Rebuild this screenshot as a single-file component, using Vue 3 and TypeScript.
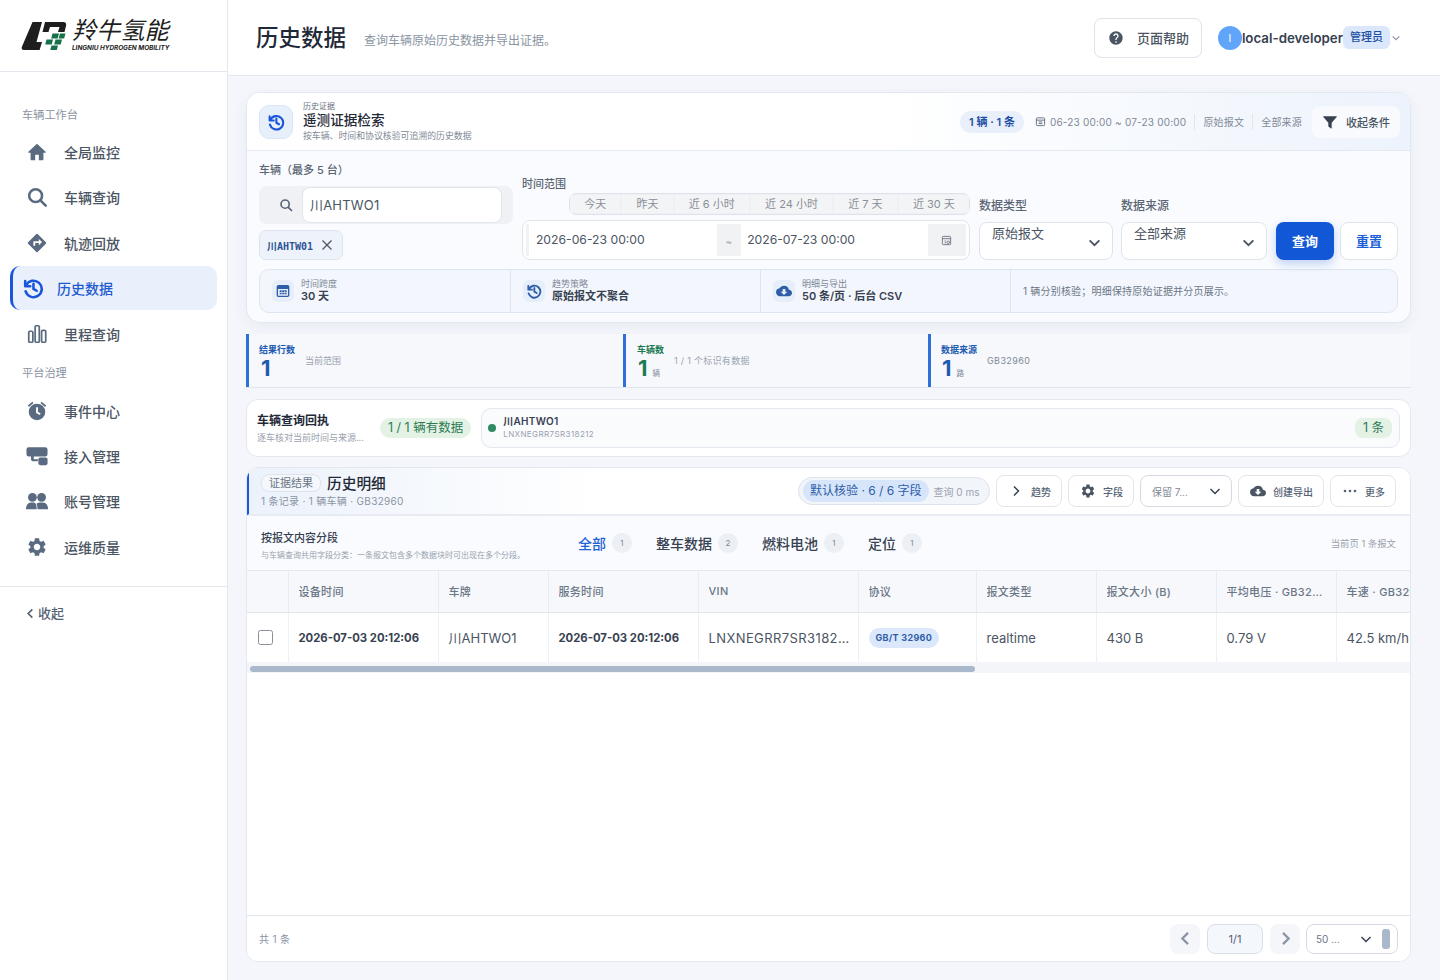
<script setup lang="ts">
const icons: Record<string, string> = {
  home: 'M12 3 2.600 11.600c-.5.5-.2 1.200.5 1.200H5v7c0 .7.5 1.200 1.200 1.200H10v-6h4v6h3.800c.7 0 1.200-.5 1.200-1.200v-7h1.900c.7 0 1-.7.5-1.200L12 3z',
  route:
    'M21.710 11.290l-9-9a.996.996 0 0 0-1.410 0l-9 9a.996.996 0 0 0 0 1.410l9 9c.39.39 1.020.39 1.410 0l9-9a.996.996 0 0 0 0-1.410zM14 14.500V12h-4v3H8v-4c0-.55.45-1 1-1h5V7.500l3.500 3.500-3.500 3.500z',
  gear: 'M19.140 12.940c.04-.3.06-.61.06-.94 0-.32-.02-.64-.07-.94l2.030-1.580a.49.49 0 0 0 .12-.61l-1.920-3.320a.488.488 0 0 0-.59-.22l-2.390.96c-.5-.38-1.030-.7-1.620-.94l-.36-2.540a.484.484 0 0 0-.48-.41h-3.840c-.24 0-.43.17-.47.41l-.36 2.540c-.59.24-1.130.57-1.620.94l-2.390-.96c-.22-.08-.47 0-.59.22L2.740 8.870c-.12.21-.08.47.12.61l2.030 1.580c-.05.3-.09.63-.09.94s.02.64.07.94l-2.030 1.580a.49.49 0 0 0-.12.61l1.920 3.320c.12.22.37.29.59.22l2.390-.96c.5.38 1.030.7 1.620.94l.36 2.540c.05.24.24.41.48.41h3.840c.24 0 .44-.17.47-.41l.36-2.540c.59-.24 1.130-.56 1.620-.94l2.390.96c.22.08.47 0 .59-.22l1.920-3.320c.12-.22.07-.47-.12-.61l-2.010-1.580zM12 15.600c-1.980 0-3.600-1.620-3.600-3.600s1.620-3.600 3.600-3.600 3.600 1.620 3.600 3.600-1.620 3.600-3.600 3.600z',
  help: 'M12 2C6.480 2 2 6.480 2 12s4.480 10 10 10 10-4.480 10-10S17.520 2 12 2zm1 17h-2v-2h2v2zm2.070-7.750l-.9.92C13.450 12.900 13 13.500 13 15h-2v-.5c0-1.100.45-2.100 1.170-2.830l1.240-1.260c.37-.36.59-.86.59-1.410 0-1.100-.9-2-2-2s-2 .9-2 2H8c0-2.210 1.790-4 4-4s4 1.790 4 4c0 .88-.36 1.680-.93 2.250z',
  cloud:
    'M19.350 10.040A7.490 7.490 0 0 0 12 4C9.110 4 6.600 5.640 5.350 8.040A5.994 5.994 0 0 0 0 14c0 3.310 2.690 6 6 6h13c2.760 0 5-2.240 5-5 0-2.640-2.050-4.780-4.650-4.960zM17 13l-5 5-5-5h3V9h4v4h3z',
  funnel: 'M2.500 3.500h19c.6 0 .9.7.5 1.100L14.500 13v8.200c0 .5-.5.8-.9.5l-3.600-2.400c-.3-.2-.5-.5-.5-.9V13L2 4.600c-.4-.4-.1-1.100.5-1.100z',
}

const primaryNav = [
  { label: '全局监控', icon: 'home' },
  { label: '车辆查询', icon: 'search' },
  { label: '轨迹回放', icon: 'route' },
  { label: '历史数据', icon: 'history', active: true },
  { label: '里程查询', icon: 'bars' },
]
const platformNav = [
  { label: '事件中心', icon: 'alarm' },
  { label: '接入管理', icon: 'link' },
  { label: '账号管理', icon: 'people' },
  { label: '运维质量', icon: 'gear' },
]
const quickRanges = ['今天', '昨天', '近 6 小时', '近 24 小时', '近 7 天', '近 30 天']
const segments = [
  { label: '全部', count: 1, active: true },
  { label: '整车数据', count: 2 },
  { label: '燃料电池', count: 1 },
  { label: '定位', count: 1 },
]
const columns = [
  { label: '设备时间', width: 150 },
  { label: '车牌', width: 110 },
  { label: '服务时间', width: 150 },
  { label: 'VIN', width: 160 },
  { label: '协议', width: 118 },
  { label: '报文类型', width: 120 },
  { label: '报文大小 (B)', width: 120 },
  { label: '平均电压 · GB32960', width: 120 },
  { label: '车速 · GB32960', width: 120 },
]
</script>

<template>
  <div class="shell">
    <aside class="sidebar">
      <div class="brand">
        <svg class="brand-mark" viewBox="0 0 46 30" aria-hidden="true">
          <path d="M11.500 1H21l-5.500 20H21l-2.400 8H3Q0 29 .8 26z" fill="#1e1e1e" />
          <path d="M24 1h18q4 0 3 4l-1.500 6H37l1.500-5H29l-1.500 5H21.500z" fill="#1e1e1e" />
          <path d="M31.500 12.500h6.500l-1.300 5h-6.500zM39 12.500h5.500l-1.400 5h-5.500zM25.500 18.500H32l-1.300 5h-6.500zM34.500 18.500h6.500l-1.300 5h-6.500zM30.500 24.500H37L35.800 29h-6.500z" fill="#17724a" />
        </svg>
        <div class="brand-text">
          <div class="brand-cn">羚牛氢能</div>
          <div class="brand-en">LINGNIU HYDROGEN MOBILITY</div>
        </div>
      </div>

      <nav class="nav">
        <div class="nav-title">车辆工作台</div>
        <a v-for="item in primaryNav" :key="item.label" class="nav-item" :class="{ active: item.active }">
          <span class="nav-icon">
            <svg v-if="item.icon === 'home' || item.icon === 'route'" viewBox="0 0 24 24"><path :d="icons[item.icon]" /></svg>
            <svg v-else-if="item.icon === 'search'" viewBox="0 0 24 24" class="line"><circle cx="10.500" cy="10.500" r="7" /><path d="m16 16 5.500 5.500" /></svg>
            <svg v-else-if="item.icon === 'history'" viewBox="0 0 24 24" class="line"><path d="M4.500 9a9 9 0 1 1-.6 6.500" /><path d="M3.500 4.500V10H9" /><path d="M12.500 7.500V13l3.500 2" /></svg>
            <svg v-else viewBox="0 0 24 24" class="line thin"><rect x="3" y="9" width="4.500" height="12" rx="1.200" /><rect x="10" y="3" width="4.500" height="18" rx="1.200" /><rect x="17" y="8" width="4.500" height="13" rx="1.200" /></svg>
          </span>
          <span>{{ item.label }}</span>
        </a>
        <div class="nav-title second">平台治理</div>
        <a v-for="item in platformNav" :key="item.label" class="nav-item">
          <span class="nav-icon">
            <svg v-if="item.icon === 'alarm'" viewBox="0 0 24 24">
              <circle cx="12" cy="13" r="9" />
              <path d="M2 6 7 1.800l1.200 1.500-5 4.200zM22 6 17 1.800l-1.200 1.500 5 4.200z" />
              <path d="M12 8v5.500l3.500 2" fill="none" stroke="#fff" stroke-width="2" />
            </svg>
            <svg v-else-if="item.icon === 'link'" viewBox="0 0 24 24">
              <path d="M3 2.500h18q2.500 0 2.500 2.500v5q0 2.500-2.500 2.500H8.500v3H13v2.200H7.500q-2 0-2-2v-3.200H3q-2.500 0-2.500-2.500V5Q.5 2.500 3 2.500z" />
              <rect x="13.500" y="13.500" width="10" height="8.500" rx="2" />
            </svg>
            <svg v-else-if="item.icon === 'people'" viewBox="0 0 24 24">
              <circle cx="7" cy="8" r="4.800" /><circle cx="17" cy="8" r="4.800" />
              <path d="M0 21q0-7 5.500-7.500h3Q12 14 11.500 21zM12.500 21q0-4.500-1-6 1.500-1.500 4-1.500h3Q24 14 24 21z" />
            </svg>
            <svg v-else viewBox="0 0 24 24"><path :d="icons.gear" /></svg>
          </span>
          <span>{{ item.label }}</span>
        </a>
      </nav>

      <div class="collapse">
        <svg viewBox="0 0 12 12" class="chev-left"><path d="M8 1.500 3.500 6 8 10.500" /></svg>
        <span>收起</span>
      </div>
    </aside>

    <main class="main">
      <header class="topbar">
        <h1>历史数据</h1>
        <p>查询车辆原始历史数据并导出证据。</p>
        <button class="help-btn">
          <svg viewBox="0 0 24 24"><path :d="icons.help" /></svg>
          <span>页面帮助</span>
        </button>
        <div class="user">
          <span class="avatar">l</span>
          <span class="user-name">local-developer</span>
          <span class="role">管理员</span>
          <svg viewBox="0 0 12 12" class="user-caret"><path d="m2 4 4 4 4-4" /></svg>
        </div>
      </header>

      <div class="content">
        <section class="search-card">
          <div class="search-head">
            <span class="head-icon">
              <svg viewBox="0 0 24 24" class="line"><path d="M4.500 9a9 9 0 1 1-.6 6.500" /><path d="M3.500 4.500V10H9" /><path d="M12.500 7.500V13l3.500 2" /></svg>
            </span>
            <div class="head-text">
              <div class="eyebrow">历史证据</div>
              <div class="head-title">遥测证据检索</div>
              <div class="head-sub">按车辆、时间和协议核验可追溯的历史数据</div>
            </div>
            <div class="head-meta">
              <span class="count-pill">1 辆 · 1 条</span>
              <svg viewBox="0 0 12 12" class="mini-cal"><rect x="1.500" y="2" width="9" height="8.500" rx="1" /><path d="M1.500 4.500h9M4 6.500h4M4 8.300h4" /></svg>
              <span class="meta-text first">06-23 00:00 ~ 07-23 00:00</span>
              <span class="meta-text">原始报文</span>
              <span class="meta-text">全部来源</span>
              <button class="fold-btn">
                <svg viewBox="0 0 24 24"><path :d="icons.funnel" /></svg>
                <span>收起条件</span>
              </button>
            </div>
          </div>

          <div class="search-body">
            <div class="filter-row">
              <div class="field vehicle">
                <label>车辆（最多 5 台）</label>
                <div class="vehicle-input">
                  <span class="addon">
                    <svg viewBox="0 0 24 24" class="line"><circle cx="10.500" cy="10.500" r="7" /><path d="m16 16 5.500 5.500" /></svg>
                  </span>
                  <div class="plain-input">川AHTWO1</div>
                </div>
                <div class="plate-tag">
                  <span>川AHTW01</span>
                  <svg viewBox="0 0 12 12"><path d="m1.500 1.500 9 9M10.500 1.500l-9 9" /></svg>
                </div>
              </div>

              <div class="field time">
                <label>时间范围</label>
                <div class="quick-group">
                  <span v-for="range in quickRanges" :key="range" class="quick">{{ range }}</span>
                </div>
                <div class="date-box">
                  <span class="date-edge"></span>
                  <span class="date-value">2026-06-23 00:00</span>
                  <span class="date-sep">~</span>
                  <span class="date-value end">2026-07-23 00:00</span>
                  <span class="date-icon">
                    <svg viewBox="0 0 12 12"><rect x="1.500" y="1.500" width="9" height="9" rx="1" /><path d="M1.500 4h9M4 6.500h1.500M4 8.500h1.500" /><circle cx="8" cy="8" r="1.400" /></svg>
                  </span>
                </div>
              </div>

              <div class="field type">
                <label>数据类型</label>
                <div class="select-box">
                  <span>原始报文</span>
                  <svg viewBox="0 0 12 12" class="caret"><path d="m1.500 4 4.500 4.500L10.500 4" /></svg>
                </div>
              </div>

              <div class="field source">
                <label>数据来源</label>
                <div class="select-box">
                  <span>全部来源</span>
                  <svg viewBox="0 0 12 12" class="caret"><path d="m1.500 4 4.500 4.500L10.500 4" /></svg>
                </div>
              </div>

              <button class="query-btn">查询</button>
              <button class="reset-btn">重置</button>
            </div>

            <div class="summary-strip">
              <div class="summary-cell">
                <span class="summary-icon">
                  <svg viewBox="0 0 24 24"><path d="M5 3h14q2.500 0 2.500 2.500v13q0 2.500-2.500 2.500H5q-2.500 0-2.500-2.500v-13Q2.500 3 5 3zm-.5 6v9.500q0 .5.5.5h14q.5 0 .5-.5V9z" fill-rule="evenodd" /><path d="M7 11h3v2.500H7zM10.800 11h3v2.500h-3zM14.500 11h3v2.500h-3zM7 14.500h3V17H7zM10.800 14.500h3V17h-3zM14.500 14.500h3V17h-3z" /></svg>
                </span>
                <div><div class="summary-label">时间跨度</div><div class="summary-value">30 天</div></div>
              </div>
              <div class="summary-cell">
                <span class="summary-icon">
                  <svg viewBox="0 0 24 24" class="line"><path d="M4.500 9a9 9 0 1 1-.6 6.500" /><path d="M3.500 4.500V10H9" /><path d="M12.500 7.500V13l3.500 2" /></svg>
                </span>
                <div><div class="summary-label">趋势策略</div><div class="summary-value">原始报文不聚合</div></div>
              </div>
              <div class="summary-cell">
                <span class="summary-icon">
                  <svg viewBox="0 0 24 24"><path :d="icons.cloud" /></svg>
                </span>
                <div><div class="summary-label">明细与导出</div><div class="summary-value">50 条/页 · 后台 CSV</div></div>
              </div>
              <div class="summary-note">1 辆分别核验；明细保持原始证据并分页展示。</div>
            </div>
          </div>
        </section>

        <section class="stats">
          <div class="stat s1">
            <div class="stat-main">
              <div class="stat-label blue">结果行数</div>
              <div class="stat-value blue">1</div>
            </div>
            <div class="stat-hint">当前范围</div>
          </div>
          <div class="stat s2">
            <div class="stat-main">
              <div class="stat-label green">车辆数</div>
              <div class="stat-value green">1<small>辆</small></div>
            </div>
            <div class="stat-hint">1 / 1 个标识有数据</div>
          </div>
          <div class="stat s3">
            <div class="stat-main">
              <div class="stat-label blue">数据来源</div>
              <div class="stat-value blue">1<small>路</small></div>
            </div>
            <div class="stat-hint">GB32960</div>
          </div>
        </section>

        <section class="receipt">
          <div class="receipt-text">
            <div class="receipt-title">车辆查询回执</div>
            <div class="receipt-sub">逐车核对当前时间与来源...</div>
          </div>
          <span class="receipt-pill">1 / 1 辆有数据</span>
          <div class="receipt-item">
            <span class="dot"></span>
            <div class="receipt-car">
              <div class="car-plate">川AHTWO1</div>
              <div class="car-vin">LNXNEGRR7SR318212</div>
            </div>
            <span class="receipt-count">1 条</span>
          </div>
        </section>

        <section class="result">
          <div class="result-head">
            <div class="result-title-wrap">
              <div class="result-title-row">
                <span class="evidence-tag">证据结果</span>
                <span class="result-title">历史明细</span>
              </div>
              <div class="result-sub">1 条记录 · 1 辆车辆 · GB32960</div>
            </div>
            <div class="result-tools">
              <div class="check-pill">
                <span class="check-inner">默认核验 · 6 / 6 字段</span>
                <span class="check-ms">查询 0 ms</span>
              </div>
              <button class="tool trend">
                <svg viewBox="0 0 12 12" class="tool-chev"><path d="m4 1.500 4.500 4.500L4 10.500" /></svg>
                <span>趋势</span>
              </button>
              <button class="tool fields">
                <svg viewBox="0 0 24 24" class="tool-icon"><path :d="icons.gear" /></svg>
                <span>字段</span>
              </button>
              <div class="tool tool-select">
                <span>保留 7...</span>
                <svg viewBox="0 0 12 12" class="tool-chev"><path d="m1.500 4 4.500 4.500L10.500 4" /></svg>
              </div>
              <button class="tool export">
                <svg viewBox="0 0 24 24" class="tool-icon"><path :d="icons.cloud" /></svg>
                <span>创建导出</span>
              </button>
              <button class="tool more">
                <svg viewBox="0 0 14 4" class="tool-dots"><circle cx="2" cy="2" r="1.300" /><circle cx="7" cy="2" r="1.300" /><circle cx="12" cy="2" r="1.300" /></svg>
                <span>更多</span>
              </button>
            </div>
          </div>

          <div class="segment-bar">
            <div class="segment-intro">
              <div class="segment-title">按报文内容分段</div>
              <div class="segment-sub">与车辆查询共用字段分类：一条报文包含多个数据块时可出现在多个分段。</div>
            </div>
            <div class="segment-tabs">
              <div v-for="seg in segments" :key="seg.label" class="segment" :class="{ active: seg.active }">
                <span>{{ seg.label }}</span>
                <em>{{ seg.count }}</em>
              </div>
            </div>
            <div class="segment-note">当前页 1 条报文</div>
          </div>

          <div class="table-wrap">
            <table>
              <colgroup>
                <col style="width: 41px" />
                <col v-for="col in columns" :key="col.label" :style="{ width: col.width + 'px' }" />
              </colgroup>
              <thead>
                <tr>
                  <th></th>
                  <th v-for="col in columns" :key="col.label"><div class="cell-text">{{ col.label }}</div></th>
                </tr>
              </thead>
              <tbody>
                <tr>
                  <td class="check-cell"><span class="checkbox"></span></td>
                  <td class="strong">2026-07-03 20:12:06</td>
                  <td>川AHTWO1</td>
                  <td class="strong">2026-07-03 20:12:06</td>
                  <td><div class="cell-text vin">LNXNEGRR7SR318212</div></td>
                  <td><span class="proto">GB/T 32960</span></td>
                  <td>realtime</td>
                  <td>430 B</td>
                  <td>0.79 V</td>
                  <td>42.5 km/h</td>
                </tr>
              </tbody>
            </table>
          </div>
          <div class="h-scroll"><span class="h-thumb"></span></div>

          <div class="table-empty"></div>

          <footer class="pager">
            <span class="total">共 1 条</span>
            <button class="page-arrow"><svg viewBox="0 0 12 12"><path d="M8 1.500 3.500 6 8 10.500" /></svg></button>
            <span class="page-now">1/1</span>
            <button class="page-arrow"><svg viewBox="0 0 12 12"><path d="m4 1.500 4.500 4.500L4 10.500" /></svg></button>
            <div class="page-size">
              <span>50 ...</span>
              <svg viewBox="0 0 12 12"><path d="m1.500 4 4.500 4.500L10.500 4" /></svg>
              <i></i>
            </div>
          </footer>
        </section>
      </div>
    </main>
  </div>
</template>

<style scoped>
.shell {
  display: flex;
  height: 980px;
  overflow: hidden;
  background: #f4f6fb;
  color: #1f2937;
  font-family: Inter, "Noto Sans CJK SC", sans-serif;
}

svg {
  display: block;
  fill: currentColor;
}

svg.line {
  fill: none;
  stroke: currentColor;
  stroke-width: 2.8;
  stroke-linecap: round;
  stroke-linejoin: round;
}

svg.line.thin {
  stroke-width: 1.9;
}

button {
  font-family: inherit;
  cursor: pointer;
}

/* 侧边栏 */
.sidebar {
  flex: 0 0 228px;
  box-sizing: border-box;
  display: flex;
  flex-direction: column;
  background: #fff;
  border-right: 1px solid #e3e7ee;
}

.brand {
  height: 72px;
  box-sizing: border-box;
  display: flex;
  gap: 5px;
  padding: 19px 0 0 21px;
  border-bottom: 1px solid #e3e7ee;
}

.brand-mark {
  width: 46px;
  height: 30px;
  margin-top: 2px;
}

.brand-text {
  color: #1e1e1e;
}

.brand-cn {
  font-size: 24px;
  line-height: 24px;
  font-weight: 400;
  font-style: italic;
  letter-spacing: 0.2px;
}

.brand-en {
  margin-top: 1px;
  font-size: 6.4px;
  line-height: 8px;
  font-weight: 700;
  font-style: italic;
  white-space: nowrap;
}

.nav {
  padding: 34px 10px 0;
  height: 515px;
  box-sizing: border-box;
  border-bottom: 1px solid #e3e7ee;
}

.nav-title {
  padding-left: 12px;
  height: 18px;
  margin-bottom: 6px;
  font-size: 11.2px;
  line-height: 18px;
  color: #8b93a1;
}

.nav-title.second {
  margin: 8px 0 7px;
}

.nav-item {
  display: flex;
  align-items: center;
  gap: 16px;
  height: 44px;
  margin-bottom: 1.400px;
  padding-left: 16px;
  width: 207px;
  box-sizing: border-box;
  font-size: 14px;
  font-weight: 500;
  color: #4b5563;
  border-radius: 10px;
}

.nav-icon {
  width: 22px;
  height: 22px;
  color: #5a6a80;
}

.nav-item.active {
  gap: 13px;
  padding-left: 9px;
  color: #1f5bd0;
  background: #e9f0fc;
  border-left: 3px solid #1a56db;
}

.nav-item.active .nav-icon {
  color: #1a56db;
}

.collapse {
  display: flex;
  align-items: center;
  gap: 2px;
  padding: 16px 0 0 25px;
  font-size: 13px;
  font-weight: 500;
  line-height: 20px;
  color: #566375;
}

.chev-left {
  width: 11px;
  height: 11px;
  fill: none;
  stroke: currentColor;
  stroke-width: 1.800;
}

/* 顶栏 */
.main {
  flex: 1;
  min-width: 0;
  display: flex;
  flex-direction: column;
}

.topbar {
  height: 76px;
  flex: none;
  box-sizing: border-box;
  display: flex;
  align-items: center;
  padding: 0 39px 0 28px;
  background: #fff;
  border-bottom: 1px solid #e3e7ee;
}

.topbar h1 {
  margin: 0;
  font-size: 22.500px;
  line-height: 32px;
  font-weight: 500;
  color: #1f2937;
}

.topbar p {
  margin: 3px 0 0 18px;
  font-size: 12px;
  color: #8a94a3;
}

.help-btn {
  margin-left: auto;
  display: flex;
  align-items: center;
  gap: 13px;
  width: 108px;
  height: 40px;
  padding: 0 0 0 13px;
  font-size: 13px;
  font-weight: 500;
  color: #4b5563;
  background: #fff;
  border: 1px solid #dfe3ea;
  border-radius: 8px;
}

.help-btn svg {
  width: 16px;
  height: 16px;
  color: #4b5563;
}

.user {
  display: flex;
  align-items: center;
  margin-left: 16px;
}

.avatar {
  width: 24px;
  height: 24px;
  border-radius: 50%;
  background: #60a5fa;
  color: #fff;
  font-size: 11px;
  line-height: 24px;
  text-align: center;
}

.user-name {
  font-size: 13.300px;
  font-weight: 600;
  color: #374151;
}

.role {
  margin-right: 1px;
  padding: 0 7px;
  height: 23px;
  font-size: 11px;
  font-weight: 500;
  line-height: 23px;
  color: #1e4fa3;
  background: #dbe8fc;
  border-radius: 6px;
}

.user-caret {
  width: 10px;
  height: 10px;
  fill: none;
  stroke: #8b93a1;
  stroke-width: 1.300;
}

/* 内容区 */
.content {
  flex: 1;
  min-height: 0;
  display: flex;
  flex-direction: column;
  padding: 16px 29px 18px 18px;
}

.search-card {
  flex: none;
  height: 231px;
  box-sizing: border-box;
  background: #f9fbfe;
  border: 1px solid #e3e8f0;
  border-radius: 14px;
  box-shadow: 0 4px 14px rgba(40, 70, 120, 0.06);
  overflow: hidden;
}

.search-head {
  height: 58px;
  box-sizing: border-box;
  display: flex;
  align-items: center;
  padding: 0 10px 0 12px;
  background: linear-gradient(90deg, #fff 0%, #fff 55%, #edf3fc 100%);
  border-bottom: 1px solid #e4e9f1;
}

.head-icon {
  width: 34px;
  height: 34px;
  flex: none;
  display: grid;
  place-items: center;
  color: #1a56db;
  background: #e7effb;
  border: 1px solid #dae5f6;
  border-radius: 10px;
  box-sizing: border-box;
}

.head-icon svg {
  width: 18px;
  height: 18px;
}

.head-text {
  margin: -2px 0 0 10px;
}

.eyebrow {
  font-size: 8px;
  line-height: 10px;
  color: #6b7280;
}

.head-title {
  font-size: 13.600px;
  line-height: 19px;
  font-weight: 500;
  color: #1f2937;
}

.head-sub {
  font-size: 8.900px;
  line-height: 11px;
  color: #7f8896;
}

.head-meta {
  margin-left: auto;
  display: flex;
  align-items: center;
}

.count-pill {
  height: 22px;
  padding: 0 9px;
  margin-right: 11px;
  font-size: 11px;
  font-weight: 600;
  line-height: 22px;
  color: #1e4fa3;
  background: #e9f0fb;
  border-radius: 11px;
}

.mini-cal {
  width: 11px;
  height: 11px;
  margin-right: 4px;
  fill: none;
  stroke: #5f6b7c;
  stroke-width: 1;
}

.meta-text {
  padding: 0 8px;
  font-size: 10px;
  letter-spacing: 0.2px;
  color: #7f8896;
  border-left: 1px solid #e1e6ee;
  line-height: 16px;
}

.meta-text.first {
  padding-left: 0;
  border-left: 0;
}

.fold-btn {
  display: flex;
  align-items: center;
  gap: 8px;
  width: 88px;
  height: 32px;
  margin-left: 2px;
  padding: 0 0 0 10px;
  font-size: 11px;
  font-weight: 500;
  color: #4b5563;
  background: #f8fafd;
  border: 0;
  border-radius: 8px;
}

.fold-btn svg {
  width: 16px;
  height: 16px;
  color: #374151;
}

.search-body {
  padding: 11px 12px 0;
}

.filter-row {
  display: flex;
  align-items: flex-end;
  height: 98px;
}

.field label {
  display: block;
  font-size: 11px;
  line-height: 16px;
  font-weight: 500;
  color: #5b6675;
}

.vehicle {
  width: 254px;
  margin-right: 9px;
}

.vehicle-input {
  display: flex;
  align-items: center;
  height: 38px;
  margin-top: 8px;
  background: #eff1f5;
  border-radius: 8px;
}

.addon {
  width: 43px;
  padding-left: 20px;
  box-sizing: border-box;
  color: #566375;
}

.addon svg {
  width: 14px;
  height: 14px;
}

.plain-input {
  width: 200px;
  height: 36px;
  box-sizing: border-box;
  padding-left: 7px;
  font-size: 13px;
  letter-spacing: 0.2px;
  line-height: 35px;
  color: #4b5563;
  background: #fff;
  border: 1px solid #e1e5ec;
  border-radius: 8px;
}

.plate-tag {
  display: flex;
  align-items: center;
  gap: 8px;
  width: 84px;
  height: 30px;
  box-sizing: border-box;
  margin-top: 6px;
  padding-left: 7px;
  font-size: 10px;
  font-weight: 700;
  font-family: "DejaVu Sans Mono", "Noto Sans CJK SC", monospace;
  color: #2e5596;
  background: #eef3fb;
  border: 1px solid #dde3ed;
  border-radius: 7px;
}

.plate-tag svg {
  width: 12px;
  height: 12px;
  fill: none;
  stroke: #4b5563;
  stroke-width: 1.300;
}

.time {
  width: 448px;
  margin-right: 9px;
}

.quick-group {
  display: flex;
  gap: 2px;
  width: 401px;
  height: 22px;
  margin: 1px 0 5px auto;
  padding: 1px 0;
  box-sizing: border-box;
  background: #eef0f3;
  border: 1px solid #dfe3e9;
  border-radius: 7px;
}

.quick {
  flex: 1 1 auto;
  text-align: center;
  padding: 0 6px;
  font-size: 11px;
  line-height: 18px;
  color: #8a8f98;
  background: #f3f4f6;
  white-space: nowrap;
}

.date-box {
  display: flex;
  align-items: center;
  height: 40px;
  padding: 3px;
  box-sizing: border-box;
  background: #fff;
  border: 1px solid #e0e4ea;
  border-radius: 8px;
}

.date-edge {
  width: 3px;
  height: 32px;
  background: #f1f2f4;
}

.date-value {
  padding: 0 0 2px 7px;
  width: 185px;
  font-size: 12.200px;
  color: #4b5563;
}

.date-value.end {
  padding-left: 17px;
}

.date-sep {
  width: 25px;
  height: 32px;
  font-size: 10px;
  line-height: 34px;
  text-align: center;
  color: #9aa2ae;
  background: #f1f2f4;
  margin-right: -11px;
  position: relative;
}

.date-icon {
  margin-left: auto;
  width: 39px;
  height: 32px;
  display: grid;
  place-items: center;
  background: #f1f2f4;
}

.date-icon svg {
  width: 11px;
  height: 11px;
  fill: none;
  stroke: #6b7280;
  stroke-width: 1;
}

.type {
  width: 134px;
  margin-right: 8px;
}

.source {
  width: 146px;
  margin-right: 9px;
}

.type label,
.source label {
  font-size: 12px;
  line-height: 18px;
  margin-bottom: 7px;
}

.select-box {
  position: relative;
  height: 38px;
  box-sizing: border-box;
  padding: 0 0 0 12px;
  font-size: 13px;
  line-height: 20px;
  color: #4b5563;
  background: #fff;
  border: 1px solid #dfe3ea;
  border-radius: 8px;
}

.caret {
  position: absolute;
  right: 11px;
  top: 13px;
  width: 13px;
  height: 13px;
  fill: none;
  stroke: #4b5563;
  stroke-width: 1.700;
}

.query-btn,
.reset-btn {
  flex: none;
  height: 38px;
  padding: 0 0 2px;
  font-size: 13px;
  font-weight: 600;
  border-radius: 8px;
}

.query-btn {
  width: 58px;
  color: #fff;
  background: #1257d6;
  border: 0;
  box-shadow: 0 4px 10px rgba(18, 87, 214, 0.25);
}

.reset-btn {
  width: 58px;
  margin-left: 6px;
  color: #1a5fd8;
  background: #fff;
  border: 1px solid #dfe3ea;
}

.summary-strip {
  display: grid;
  grid-template-columns: 251px 250px 250px 1fr;
  height: 44px;
  margin-top: 9px;
  box-sizing: border-box;
  background: #f3f7fd;
  border: 1px solid #dde5f0;
  border-radius: 10px;
}

.summary-cell {
  display: flex;
  align-items: center;
  gap: 7px;
  padding-left: 12px;
  border-right: 1px solid #dde5f0;
}

.summary-icon {
  width: 22px;
  height: 22px;
  display: grid;
  place-items: center;
  color: #2e5ea8;
  background: #e6eefa;
  border-radius: 6px;
}

.summary-icon svg {
  width: 16px;
  height: 16px;
}

.summary-label {
  margin-top: -2px;
  font-size: 9px;
  line-height: 11px;
  color: #7f8896;
}

.summary-value {
  font-size: 11px;
  line-height: 14px;
  font-weight: 600;
  color: #374151;
}

.summary-note {
  padding-left: 12px;
  font-size: 10px;
  letter-spacing: 0.2px;
  line-height: 42px;
  color: #6b7686;
}

/* 指标条 */
.stats {
  display: grid;
  grid-template-columns: 377px 305px 1fr;
  flex: none;
  height: 54px;
  margin-top: 11px;
  background: #f6f8fc;
  border-bottom: 1px solid #e1e6ee;
  box-sizing: border-box;
}

.stat {
  display: flex;
  padding: 10px 0 0 10px;
  border-left: 3px solid #2f6fd8;
}

.stat.s2 {
  padding-left: 11px;
}

.stat-main {
  width: 46px;
}

.s2 .stat-main {
  width: 37px;
}

.stat-label {
  font-size: 9px;
  line-height: 11px;
  font-weight: 600;
  white-space: nowrap;
}

.stat-value {
  margin-left: 1px;
  font-size: 22px;
  line-height: 26px;
  font-weight: 700;
  white-space: nowrap;
}

.s1 .stat-value {
  margin-left: 2px;
}

.stat-value small {
  margin-left: 5px;
  font-size: 7.500px;
  font-weight: 400;
  color: #7f8896;
}

.blue {
  color: #1d5bb0;
}

.green {
  color: #1e7a52;
}

.stat-hint {
  margin-top: 11px;
  font-size: 9px;
  line-height: 12px;
  color: #9aa2ae;
}

.s2 .stat-hint {
  white-space: nowrap;
  letter-spacing: 0.3px;
}

.s3 .stat-hint {
  white-space: nowrap;
  color: #7f8896;
  letter-spacing: 0.4px;
}

/* 回执 */
.receipt {
  flex: none;
  display: flex;
  align-items: center;
  height: 58px;
  margin-top: 11px;
  padding: 0 10px;
  box-sizing: border-box;
  background: #fff;
  border: 1px solid #e3e8f0;
  border-radius: 12px;
}

.receipt-text {
  width: 123px;
}

.receipt-title {
  font-size: 12px;
  line-height: 18px;
  font-weight: 600;
  color: #1f2937;
}

.receipt-sub {
  margin-top: 1px;
  font-size: 9px;
  line-height: 13px;
  color: #9aa2ae;
  white-space: nowrap;
}

.receipt-pill {
  height: 20px;
  padding: 0 8px;
  font-size: 12.500px;
  line-height: 20px;
  color: #2e7a52;
  background: #e4f2e6;
  border-radius: 10px;
  white-space: nowrap;
}

.receipt-item {
  flex: 1;
  display: flex;
  align-items: center;
  height: 40px;
  margin-left: 10px;
  padding: 0 7px 0 6px;
  box-sizing: border-box;
  background: #f9fbfd;
  border: 1px solid #e3e8f0;
  border-radius: 10px;
}

.dot {
  width: 8px;
  height: 8px;
  border-radius: 50%;
  background: #2e8b63;
  margin-right: 7px;
}

.receipt-car {
  margin-top: -2px;
}

.car-plate {
  font-size: 10px;
  line-height: 14px;
  font-weight: 600;
  letter-spacing: 0.3px;
  color: #374151;
}

.car-vin {
  margin-top: 1px;
  font-size: 8px;
  line-height: 11px;
  letter-spacing: 0.4px;
  color: #9aa2ae;
}

.receipt-count {
  margin-left: auto;
  height: 20px;
  padding: 0 8px;
  font-size: 12.500px;
  line-height: 20px;
  color: #2e7a52;
  background: #e4f2e6;
  border-radius: 8px;
}

/* 明细 */
.result {
  flex: 1;
  min-height: 0;
  margin-top: 10px;
  display: flex;
  flex-direction: column;
  background: #fff;
  border: 1px solid #e3e8f0;
  border-radius: 12px;
  overflow: hidden;
}

.result-head {
  flex: none;
  display: flex;
  align-items: center;
  justify-content: space-between;
  height: 48px;
  box-sizing: border-box;
  padding: 0 14px 2px 12px;
  background: linear-gradient(90deg, #ecf2fb 0%, #fff 30%);
  border-left: 3px solid #1a56db;
  border-bottom: 2px solid #e8ecf2;
  margin-left: -1px;
}

.result-title-row {
  display: flex;
  align-items: center;
  gap: 6px;
  height: 20px;
}

.evidence-tag {
  height: 16px;
  padding: 0 7px;
  font-size: 11px;
  line-height: 16px;
  color: #6b7686;
  background: #f4f7fb;
  border: 1px solid #dde3ed;
  border-radius: 8px;
}

.result-title {
  font-size: 14.700px;
  font-weight: 500;
  color: #1f2937;
}

.result-sub {
  margin-top: 1px;
  font-size: 10px;
  line-height: 14px;
  letter-spacing: 0.3px;
  color: #8a94a3;
}

.result-tools {
  display: flex;
  align-items: center;
  gap: 6px;
  margin-top: 2px;
}

.check-pill {
  display: flex;
  align-items: center;
  width: 192px;
  height: 28px;
  padding: 0 0 0 4px;
  box-sizing: border-box;
  background: #f2f5fa;
  border: 1px solid #dde3ed;
  border-radius: 14px;
}

.check-inner {
  height: 22px;
  padding: 0 7px;
  font-size: 12px;
  line-height: 22px;
  color: #2e5ea8;
  background: #d7e5fa;
  border-radius: 11px;
  white-space: nowrap;
}

.check-ms {
  margin-left: 5px;
  font-size: 10px;
  color: #9aa2ae;
  white-space: nowrap;
}

.tool {
  display: flex;
  align-items: center;
  justify-content: space-between;
  width: 66px;
  height: 32px;
  padding: 0 10px 0 11px;
  box-sizing: border-box;
  font-size: 10px;
  font-weight: 500;
  color: #566375;
  background: #fff;
  border: 1px solid #e1e5ec;
  border-radius: 8px;
  white-space: nowrap;
}

.tool.trend {
  padding-left: 13px;
}

.tool.export {
  width: 86px;
}

.tool.more {
  padding-left: 12px;
}

.tool-icon {
  width: 16px;
  height: 16px;
  color: #4b5563;
}

.tool-chev {
  width: 12px;
  height: 12px;
  fill: none;
  stroke: #374151;
  stroke-width: 1.500;
}

.tool-dots {
  width: 14px;
  height: 4px;
  color: #566375;
}

.tool.tool-select {
  width: 92px;
  font-weight: 400;
  color: #7f8896;
  border-color: #d6dbe3;
}

.segment-bar {
  flex: none;
  display: flex;
  align-items: center;
  height: 55px;
  box-sizing: border-box;
  padding: 0 14px;
  background: #f9fbfe;
  border-bottom: 1px solid #e4e8ef;
}

.segment-intro {
  width: 317px;
  padding-top: 4px;
}

.segment-title {
  font-size: 11px;
  line-height: 16px;
  font-weight: 500;
  color: #374151;
}

.segment-sub {
  margin-top: 3px;
  font-size: 8px;
  line-height: 12px;
  color: #9aa2ae;
  white-space: nowrap;
}

.segment-tabs {
  display: flex;
  gap: 24px;
  margin-top: -1px;
}

.segment {
  display: flex;
  align-items: center;
  gap: 6px;
  font-size: 14px;
  font-weight: 500;
  color: #374151;
}

.segment.active {
  color: #1f62d6;
}

.segment em {
  width: 20px;
  height: 20px;
  font-size: 8px;
  font-style: normal;
  font-weight: 400;
  line-height: 20px;
  text-align: center;
  color: #7f8896;
  background: #eceff4;
  border-radius: 50%;
}

.segment-note {
  margin-left: auto;
  font-size: 9.400px;
  color: #9aa2ae;
}

.table-wrap {
  flex: none;
  overflow: hidden;
}

table {
  width: 1209px;
  table-layout: fixed;
  border-collapse: collapse;
}

th {
  height: 39px;
  padding: 0 10px 2px;
  font-size: 11px;
  letter-spacing: 0.3px;
  font-weight: 500;
  text-align: left;
  color: #6b7686;
  background: #f6f8fb;
  border-right: 1px solid #e8ebf1;
  border-bottom: 1px solid #e2e6ed;
}

.cell-text {
  overflow: hidden;
  text-overflow: ellipsis;
  white-space: nowrap;
}

.cell-text.vin {
  margin-right: -2px;
  letter-spacing: 0.4px;
}

td {
  height: 49px;
  padding: 0 10px;
  font-size: 13px;
  color: #4b5563;
  background: #fff;
  border-right: 1px solid #edf0f4;
  white-space: nowrap;
  overflow: hidden;
}

td.strong {
  font-size: 11.300px;
  font-weight: 700;
  color: #374151;
}

.check-cell {
  padding-left: 11px;
}

.checkbox {
  display: block;
  width: 13px;
  height: 13px;
  border: 1px solid #8a8f98;
  border-radius: 2.500px;
  background: #fff;
}

.proto {
  display: inline-block;
  height: 20px;
  padding: 0 7px;
  font-size: 9px;
  font-weight: 700;
  line-height: 20px;
  letter-spacing: 0.3px;
  color: #2e5ea8;
  background: #dbe7fa;
  border-radius: 10px;
}

.h-scroll {
  flex: none;
  height: 11px;
  padding: 4px 0 0 3px;
  box-sizing: border-box;
  background: #f3f5f8;
}

.h-thumb {
  display: block;
  width: 725px;
  height: 6px;
  background: #a9b8cb;
  border-radius: 3px;
}

.table-empty {
  flex: 1;
}

.pager {
  flex: none;
  display: flex;
  align-items: center;
  height: 46px;
  box-sizing: border-box;
  padding: 0 12px;
  background: #fff;
  border-top: 1px solid #e3e6ec;
}

.total {
  margin-right: auto;
  font-size: 10px;
  letter-spacing: 0.3px;
  color: #8a94a3;
}

.page-arrow {
  width: 30px;
  height: 30px;
  display: grid;
  place-items: center;
  padding: 0;
  background: #f4f6fa;
  border: 0;
  border-radius: 8px;
}

.page-arrow svg {
  width: 15px;
  height: 15px;
  fill: none;
  stroke: #8a94a3;
  stroke-width: 1.800;
}

.page-now {
  width: 56px;
  height: 30px;
  margin: 0 7px;
  box-sizing: border-box;
  font-size: 11px;
  line-height: 28px;
  text-align: center;
  color: #566375;
  background: #f4f7fc;
  border: 1px solid #d9dfe9;
  border-radius: 8px;
}

.page-size {
  display: flex;
  align-items: center;
  width: 92px;
  height: 30px;
  margin-left: 6px;
  box-sizing: border-box;
  padding-left: 9px;
  font-size: 10px;
  color: #6b7686;
  background: #fff;
  border: 1px solid #d6dbe3;
  border-radius: 8px;
}

.page-size svg {
  width: 12px;
  height: 12px;
  margin-left: 20px;
  fill: none;
  stroke: #374151;
  stroke-width: 1.500;
}

.page-size i {
  width: 8px;
  height: 20px;
  margin-left: 10px;
  background: #a9b8cb;
  border-radius: 3px;
}
</style>

<style>
html,
body {
  margin: 0;
  background: #f4f6fb;
}
</style>
